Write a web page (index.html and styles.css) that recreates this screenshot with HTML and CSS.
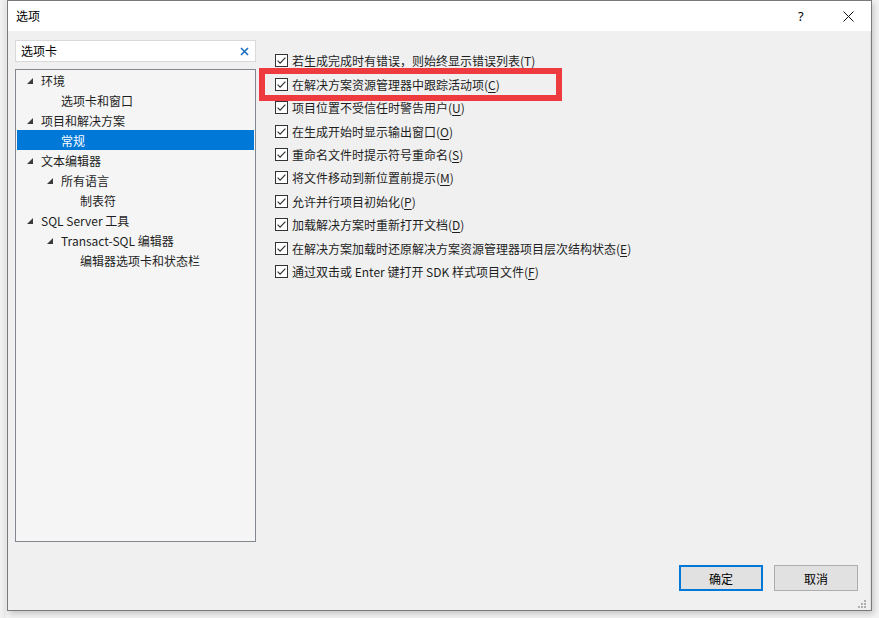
FILE: index.html
```html
<!DOCTYPE html>
<html lang="zh-CN">
<head>
<meta charset="utf-8">
<title>选项</title>
<link rel="stylesheet" href="styles.css">
</head>
<body>
<div class="backdrop">
  <div class="dialog">
    <div class="titlebar">
      <span class="title">选项</span>
      <div class="tb-buttons">
        <span class="help">?</span>
        <svg class="close" width="11" height="11" viewBox="0 0 11 11"><path d="M0.5 0.5 L10.5 10.5 M10.5 0.5 L0.5 10.5" stroke="#111" stroke-width="1" fill="none"/></svg>
      </div>
    </div>
    <div class="body">
      <div class="main">
        <div class="left">
          <div class="search">
            <span class="search-text">选项卡</span>
            <svg class="clear" width="9" height="9" viewBox="0 0 9 9"><path d="M1 1 L8 8 M8 1 L1 8" stroke="#1c6fc0" stroke-width="1.6" fill="none"/></svg>
          </div>
          <div class="tree">
            <div class="node l0"><span class="tog"><i class="tri"></i></span><span>环境</span></div>
            <div class="node l1"><span class="tog"></span><span>选项卡和窗口</span></div>
            <div class="node l0"><span class="tog"><i class="tri"></i></span><span>项目和解决方案</span></div>
            <div class="node l1 selected"><span class="tog"></span><span>常规</span></div>
            <div class="node l0"><span class="tog"><i class="tri"></i></span><span>文本编辑器</span></div>
            <div class="node l1"><span class="tog"><i class="tri"></i></span><span>所有语言</span></div>
            <div class="node l2"><span class="tog"></span><span>制表符</span></div>
            <div class="node l0"><span class="tog"><i class="tri"></i></span><span>SQL Server 工具</span></div>
            <div class="node l1"><span class="tog"><i class="tri"></i></span><span>Transact-SQL 编辑器</span></div>
            <div class="node l2"><span class="tog"></span><span>编辑器选项卡和状态栏</span></div>
          </div>
        </div>
        <div class="options">
          <div class="opt"><svg class="cb" width="13" height="13" viewBox="0 0 13 13"><rect x="0.5" y="0.5" width="12" height="12" fill="#fff" stroke="#333"/><path d="M2.6 6.6 L5.1 9.1 L10.4 3.6" fill="none" stroke="#333" stroke-width="1.2"/></svg><span>若生成完成时有错误，则始终显示错误列表(<u>T</u>)</span></div>
          <div class="opt"><svg class="cb" width="13" height="13" viewBox="0 0 13 13"><rect x="0.5" y="0.5" width="12" height="12" fill="#fff" stroke="#333"/><path d="M2.6 6.6 L5.1 9.1 L10.4 3.6" fill="none" stroke="#333" stroke-width="1.2"/></svg><span>在解决方案资源管理器中跟踪活动项(<u>C</u>)</span></div>
          <div class="opt"><svg class="cb" width="13" height="13" viewBox="0 0 13 13"><rect x="0.5" y="0.5" width="12" height="12" fill="#fff" stroke="#333"/><path d="M2.6 6.6 L5.1 9.1 L10.4 3.6" fill="none" stroke="#333" stroke-width="1.2"/></svg><span>项目位置不受信任时警告用户(<u>U</u>)</span></div>
          <div class="opt"><svg class="cb" width="13" height="13" viewBox="0 0 13 13"><rect x="0.5" y="0.5" width="12" height="12" fill="#fff" stroke="#333"/><path d="M2.6 6.6 L5.1 9.1 L10.4 3.6" fill="none" stroke="#333" stroke-width="1.2"/></svg><span>在生成开始时显示输出窗口(<u>O</u>)</span></div>
          <div class="opt"><svg class="cb" width="13" height="13" viewBox="0 0 13 13"><rect x="0.5" y="0.5" width="12" height="12" fill="#fff" stroke="#333"/><path d="M2.6 6.6 L5.1 9.1 L10.4 3.6" fill="none" stroke="#333" stroke-width="1.2"/></svg><span>重命名文件时提示符号重命名(<u>S</u>)</span></div>
          <div class="opt"><svg class="cb" width="13" height="13" viewBox="0 0 13 13"><rect x="0.5" y="0.5" width="12" height="12" fill="#fff" stroke="#333"/><path d="M2.6 6.6 L5.1 9.1 L10.4 3.6" fill="none" stroke="#333" stroke-width="1.2"/></svg><span>将文件移动到新位置前提示(<u>M</u>)</span></div>
          <div class="opt"><svg class="cb" width="13" height="13" viewBox="0 0 13 13"><rect x="0.5" y="0.5" width="12" height="12" fill="#fff" stroke="#333"/><path d="M2.6 6.6 L5.1 9.1 L10.4 3.6" fill="none" stroke="#333" stroke-width="1.2"/></svg><span>允许并行项目初始化(<u>P</u>)</span></div>
          <div class="opt"><svg class="cb" width="13" height="13" viewBox="0 0 13 13"><rect x="0.5" y="0.5" width="12" height="12" fill="#fff" stroke="#333"/><path d="M2.6 6.6 L5.1 9.1 L10.4 3.6" fill="none" stroke="#333" stroke-width="1.2"/></svg><span>加载解决方案时重新打开文档(<u>D</u>)</span></div>
          <div class="opt"><svg class="cb" width="13" height="13" viewBox="0 0 13 13"><rect x="0.5" y="0.5" width="12" height="12" fill="#fff" stroke="#333"/><path d="M2.6 6.6 L5.1 9.1 L10.4 3.6" fill="none" stroke="#333" stroke-width="1.2"/></svg><span>在解决方案加载时还原解决方案资源管理器项目层次结构状态(<u>E</u>)</span></div>
          <div class="opt"><svg class="cb" width="13" height="13" viewBox="0 0 13 13"><rect x="0.5" y="0.5" width="12" height="12" fill="#fff" stroke="#333"/><path d="M2.6 6.6 L5.1 9.1 L10.4 3.6" fill="none" stroke="#333" stroke-width="1.2"/></svg><span>通过双击或 Enter 键打开 SDK 样式项目文件(<u>F</u>)</span></div>
          <div class="highlight"></div>
        </div>
      </div>
      <div class="footer">
        <button class="btn primary">确定</button>
        <button class="btn">取消</button>
      </div>
      <svg class="grip" width="9" height="9" viewBox="0 0 9 9"><g fill="#b0b0b0"><rect x="7" y="1" width="2" height="2"/><rect x="4" y="4" width="2" height="2"/><rect x="7" y="4" width="2" height="2"/><rect x="1" y="7" width="2" height="2"/><rect x="4" y="7" width="2" height="2"/><rect x="7" y="7" width="2" height="2"/></g></svg>
    </div>
  </div>
</div>
</body>
</html>
```
FILE: styles.css
```css
* { box-sizing: border-box; }
html, body {
  margin: 0;
  padding: 0;
  width: 879px;
  height: 618px;
  overflow: hidden;
  background: #eeeeee;
  font-family: "Microsoft YaHei UI", "Noto Sans CJK SC", sans-serif;
  font-size: 12px;
  color: #000;
}
.backdrop {
  width: 879px;
  height: 618px;
  padding-left: 7px;
  background: linear-gradient(to right, #f3f3f3 0, #e9e9e9 5px, #f3f3f3 7px);
}
.dialog {
  width: 865px;
  height: 611px;
  border: 1px solid #7a7a7a;
  background: #f0f0f0;
  display: flex;
  flex-direction: column;
  box-shadow: 2px 3px 6px rgba(0,0,0,0.18);
}
.titlebar {
  height: 30px;
  background: #fff;
  display: flex;
  align-items: center;
  justify-content: space-between;
  padding-left: 8px;
  flex: none;
}
.title { font-size: 12px; line-height: 16px; }
.tb-buttons { display: flex; align-items: center; }
.help { font-size: 13px; font-family: "Segoe UI", "Noto Sans", sans-serif; width: 8px; margin-right: 37px; }
.close { margin-right: 17px; }
.body {
  flex: 1;
  display: flex;
  flex-direction: column;
  position: relative;
  padding: 9px 12px 19px 7px;
  border-right: 1px solid #e2e2e2;
}
.main {
  flex: 1;
  display: flex;
  min-height: 0;
}
.left {
  width: 241px;
  display: flex;
  flex-direction: column;
  gap: 7px;
  flex: none;
}
.search {
  height: 22px;
  background: #fff;
  border: 1px solid #d9d9d9;
  display: flex;
  align-items: center;
  justify-content: space-between;
  padding: 0 6px 0 5px;
}
.search-text { line-height: 16px; }
.tree {
  height: 473px;
  background: #f5f5f5;
  border: 1px solid #828790;
  padding: 0 1px;
}
.node {
  height: 20px;
  display: flex;
  align-items: center;
  white-space: nowrap;
  color: #1e1e1e;
}
.node.l0 { padding-left: 10px; }
.node.l1 { padding-left: 30px; }
.node.l2 { padding-left: 49px; }
.tog {
  width: 14px;
  flex: none;
  display: flex;
  align-items: center;
  height: 20px;
}
.tri {
  display: block;
  width: 0;
  height: 0;
  border-style: solid;
  border-width: 0 0 6px 6px;
  border-color: transparent transparent #3c3c3c transparent;
  margin-top: 1px;
}
.node.selected {
  background: #0078d7;
  color: #fff;
}
.options {
  position: relative;
  flex: 1;
  padding: 9px 0 0 19px;
}
.opt {
  height: 23.45px;
  display: flex;
  align-items: center;
  white-space: nowrap;
  color: #1e1e1e;
}
.cb { flex: none; margin-right: 4px; }
.opt u { text-underline-offset: 2px; }
.highlight {
  position: absolute;
  left: 3px;
  top: 28px;
  width: 303px;
  height: 33px;
  border: 6px solid #ee3b3f;
}
.footer {
  display: flex;
  justify-content: flex-end;
  gap: 11px;
  flex: none;
}
.btn {
  width: 84px;
  height: 26px;
  background: #e1e1e1;
  border: 1px solid #adadad;
  font-family: inherit;
  font-size: 12px;
  color: #000;
  padding: 0;
}
.btn.primary {
  border: 2px solid #0078d7;
}
.grip {
  position: absolute;
  right: 4px;
  bottom: 2px;
}
```
